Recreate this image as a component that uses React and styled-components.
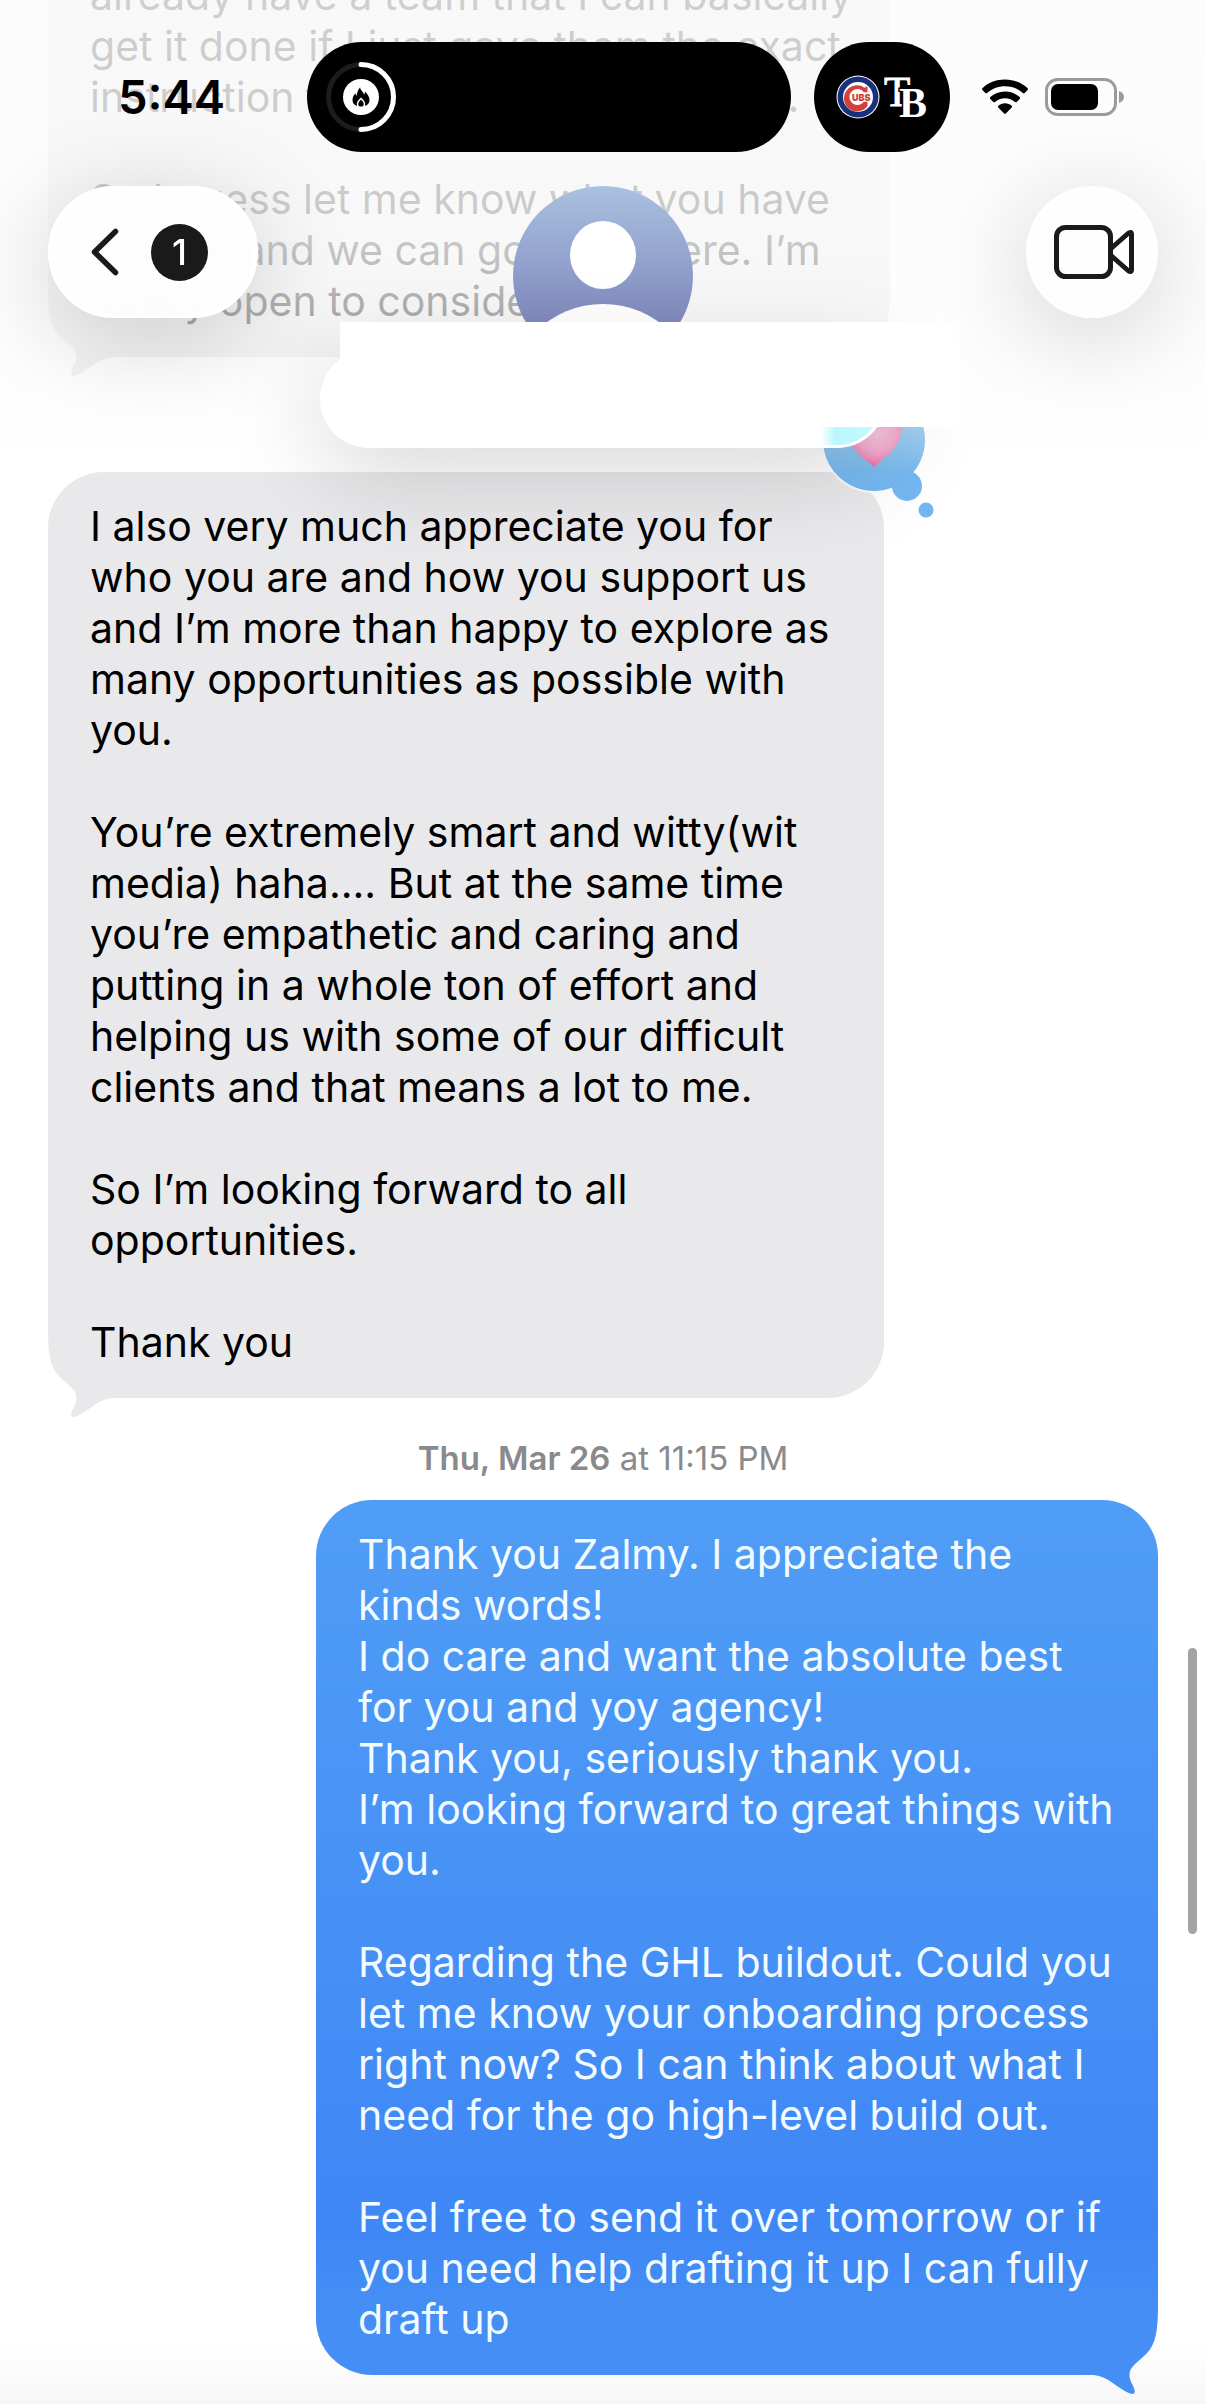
import React from 'react';
import styled, { createGlobalStyle, css } from 'styled-components';

const earlierMessage = `already have a team that I can basically
get it done if I just gave them the exact
instruction for when they have to do.

So I guess let me know what you have
in mind and we can go from there. I’m
totally open to considering it`;

const receivedMessage = `I also very much appreciate you for
who you are and how you support us
and I’m more than happy to explore as
many opportunities as possible with
you.

You’re extremely smart and witty(wit
media) haha.... But at the same time
you’re empathetic and caring and
putting in a whole ton of effort and
helping us with some of our difficult
clients and that means a lot to me.

So I’m looking forward to all
opportunities.

Thank you`;

const sentMessage = `Thank you Zalmy. I appreciate the
kinds words!
I do care and want the absolute best
for you and yoy agency!
Thank you, seriously thank you.
I’m looking forward to great things with
you.

Regarding the GHL buildout. Could you
let me know your onboarding process
right now? So I can think about what I
need for the go high-level build out.

Feel free to send it over tomorrow or if
you need help drafting it up I can fully
draft up`;

const FlameRing = () => (
  <svg width="70" height="70" viewBox="0 0 70 70" fill="none" aria-hidden="true">
    <circle cx="35" cy="35" r="32.5" stroke="#1c1c1e" strokeWidth="5" />
    <path
      d="M35 2.5a32.5 32.5 0 0 1 0 65"
      stroke="#fff"
      strokeWidth="5"
      strokeLinecap="round"
    />
    <circle cx="35" cy="35" r="18" fill="#fff" />
    <path
      d="M34 25.5c1 3.500 3.500 4.500 4 7 .8-.8 1-1.800 1-3 2.800 2.700 4.500 5.500 4.500 8.500 0 4-3 6.500-8.500 6.500s-8.500-2.500-8.500-6.800c0-3 1.500-5 3.200-6.500 0 1.200.3 2 1.100 2.600.2-3.200 1.200-6.300 3.200-8.300z"
      fill="#000"
    />
    <path
      d="M35 36.500c2.200 2 3.500 3.500 3.500 5.500 0 2.200-1.500 3.300-3.500 3.300s-3.500-1.100-3.500-3.300c0-2 1.300-3.500 3.500-5.500z"
      fill="#000"
      stroke="#fff"
      strokeWidth="1.500"
    />
  </svg>
);

const CubsLogo = () => (
  <svg width="44" height="44" viewBox="0 0 44 44" aria-label="Cubs">
    <circle cx="22" cy="22" r="21.500" fill="#fff" />
    <circle cx="22" cy="22" r="20.500" fill="#17317f" />
    <circle cx="22" cy="22" r="15" fill="#fff" />
    <path
      d="M31.500 17.500v-6.200l-3 1.500A13 13 0 1 0 31.500 31v-4.500h-3.500a8 8 0 1 1 0-9z"
      fill="#d2413a"
    />
    <rect x="16" y="17.500" width="19" height="9" fill="#fff" />
    <text
      x="16"
      y="26"
      fontFamily="Inter, sans-serif"
      fontWeight="900"
      fontSize="9"
      fill="#d2413a"
    >
      UBS
    </text>
  </svg>
);

const RaysLogo = () => (
  <svg width="44" height="44" viewBox="0 0 44 44" aria-label="Rays">
    <g fontFamily="'Liberation Serif', serif" fill="#fff">
      <text x="0" y="31" fontSize="43" stroke="#fff" strokeWidth="1">
        T
      </text>
      <text
        x="15"
        y="42"
        fontSize="42"
        fontWeight="700"
        style={{ paintOrder: 'stroke' }}
        stroke="#000"
        strokeWidth="3"
      >
        B
      </text>
    </g>
  </svg>
);

const WifiIcon = () => (
  <svg width="48" height="36" viewBox="0 0 48 36" aria-label="Wi-Fi">
    <path d="M24 0.500c9 0 17 3.300 22.600 8.700.5.500.5 1.300 0 1.800l-3 3c-.5.500-1.200.5-1.700 0C37.200 9.800 30.900 7.300 24 7.300S10.800 9.800 6.100 14c-.5.500-1.200.5-1.700 0l-3-3c-.5-.5-.5-1.300 0-1.800C7 3.800 15 .5 24 .5z" />
    <path d="M24 12.500c5.700 0 10.800 2.100 14.700 5.600.5.500.5 1.300 0 1.800l-3 3c-.5.500-1.200.5-1.700 0-2.700-2.300-6.200-3.700-10-3.700s-7.300 1.400-10 3.700c-.5.500-1.200.5-1.700 0l-3-3c-.5-.5-.5-1.300 0-1.800 3.900-3.500 9-5.600 14.700-5.600z" />
    <path d="M24 24.300c2.600 0 4.900.9 6.700 2.400.5.500.6 1.200 0 1.800l-5.800 6.100c-.5.500-1.300.5-1.800 0l-5.800-6.100c-.6-.6-.5-1.300 0-1.800 1.800-1.500 4.100-2.400 6.700-2.400z" />
  </svg>
);

const BatteryIcon = () => (
  <svg width="80" height="38" viewBox="0 0 80 38" aria-label="Battery">
    <rect
      x="1.500"
      y="1.500"
      width="69"
      height="35"
      rx="11"
      fill="none"
      stroke="#9b9b9b"
      strokeWidth="3"
    />
    <rect x="6" y="6" width="47" height="26" rx="7" fill="#000" />
    <path d="M74 13c3 1 5 3.300 5 6s-2 5-5 6z" fill="#9b9b9b" />
  </svg>
);

const ChevronIcon = () => (
  <svg width="28" height="48" viewBox="0 0 28 48" fill="none" aria-hidden="true">
    <path
      d="M24.500 3.500 3.500 24l21 20.500"
      stroke="#1a1a1a"
      strokeWidth="5.500"
      strokeLinecap="round"
      strokeLinejoin="round"
    />
  </svg>
);

const VideoIcon = () => (
  <svg width="80" height="54" viewBox="0 0 80 54" fill="none" aria-hidden="true">
    <g stroke="#1a1a1a" strokeWidth="5" strokeLinejoin="round">
      <rect x="2.500" y="2.500" width="54" height="49" rx="9" />
      <path d="M57 23.500 74 8.500q3.500-2.500 3.500 1v35q0 3.500-3.500 1L57 30.500" />
    </g>
  </svg>
);

const AvatarIcon = () => (
  <svg width="180" height="180" viewBox="0 0 180 180" aria-hidden="true">
    <defs>
      <linearGradient id="avatar" x1="0" y1="0" x2="0" y2="1">
        <stop offset="0" stopColor="#a9c1e0" />
        <stop offset="0.760" stopColor="#8089bd" />
        <stop offset="1" stopColor="#777fb5" />
      </linearGradient>
      <clipPath id="avatarClip">
        <circle cx="90" cy="90" r="90" />
      </clipPath>
    </defs>
    <g clipPath="url(#avatarClip)">
      <rect width="180" height="180" fill="url(#avatar)" />
      <ellipse cx="90" cy="69" rx="33" ry="34" fill="#fff" />
      <circle cx="90" cy="214" r="96" fill="#fff" />
    </g>
  </svg>
);

const HeartReaction = () => (
  <svg width="112" height="132" viewBox="0 0 112 132" role="img" aria-label="Heart">
    <defs>
      <linearGradient id="tapback" x1="0" y1="0" x2="0" y2="1">
        <stop offset="0" stopColor="#9bcbe6" />
        <stop offset="1" stopColor="#72b7f3" />
      </linearGradient>
      <radialGradient id="heart" cx="0.550" cy="0.400" r="0.600">
        <stop offset="0" stopColor="#f5bcd8" />
        <stop offset="0.600" stopColor="#f49fc8" />
        <stop offset="1" stopColor="#f36ba4" />
      </radialGradient>
    </defs>
    <circle cx="52" cy="53" r="53" fill="#fff" fillOpacity="0.800" />
    <circle cx="52" cy="53" r="51" fill="url(#tapback)" />
    <circle cx="85" cy="99" r="15" fill="#74b8f3" />
    <circle cx="104" cy="123" r="7.500" fill="#72b7f3" />
    <path
      d="M52 80C44 72 25 62 25 43c0-10 7-17 15-17 6 0 10 3 12 8 2-5 6-8 12-8 8 0 15 7 15 17 0 19-19 29-27 37z"
      fill="url(#heart)"
    />
  </svg>
);

const BubbleTail = ({ flip }) => (
  <Tail width="70" height="90" viewBox="0 0 70 90" $flip={flip} aria-hidden="true">
    <path d="M0 0C0 30 3 42 15 52 24 60 28.500 63 28.500 70 28.500 77 24 80 23.300 86 23 89 25 89.500 28 88.500 40 84 50 71 64 70H70V0Z" />
  </Tail>
);

const App = () => (
  <>
    <GlobalStyle />
    <Screen>
      <Thread>
        <Bubble $max={842} $gap={115}>
          {earlierMessage}
          <BubbleTail />
        </Bubble>
        <Bubble $max={836}>
          {receivedMessage}
          <BubbleTail />
          <Reaction>
            <HeartReaction />
          </Reaction>
        </Bubble>
        <DateLine>
          <b>Thu, Mar 26</b> at 11:15 PM
        </DateLine>
        <Bubble $sent $max={842}>
          {sentMessage}
          <BubbleTail flip />
        </Bubble>
      </Thread>

      <Scrim />

      <TopBar>
        <StatusBar>
          <Time>5:44</Time>
          <Island>
            <FlameRing />
          </Island>
          <ScorePill>
            <CubsLogo />
            <RaysLogo />
          </ScorePill>
          <WifiIcon />
          <BatteryIcon />
        </StatusBar>
        <NavBar>
          <BackButton aria-label="Back, 1 unread">
            <ChevronIcon />
            <Badge>1</Badge>
          </BackButton>
          <Contact>
            <AvatarIcon />
            <NamePill>
              <Glint />
            </NamePill>
            <Cover />
          </Contact>
          <VideoButton aria-label="Video call">
            <VideoIcon />
          </VideoButton>
        </NavBar>
      </TopBar>

      <ScrollThumb />
    </Screen>
  </>
);

const GlobalStyle = createGlobalStyle`
  * {
    box-sizing: border-box;
  }

  body {
    margin: 0;
    background: #fff;
    font-family: Inter, sans-serif;
  }

  svg {
    display: block;
    flex: none;
  }

  button {
    border: 0;
    padding: 0;
    font: inherit;
    cursor: pointer;
  }
`;

const Screen = styled.div`
  position: relative;
  height: 100vh;
  overflow: hidden;
  background: linear-gradient(to top, #f7f7f7, #fff 60px);
`;

const Thread = styled.main`
  display: flex;
  flex-direction: column;
  justify-content: flex-end;
  height: 100%;
  padding: 0 48px 29px;
`;

const Tail = styled.svg`
  position: absolute;
  bottom: -20px;
  left: 0;
  z-index: -1;
  fill: #e9e9eb;

  ${({ $flip }) =>
    $flip &&
    css`
      left: auto;
      right: 0;
      transform: scaleX(-1);
      fill: #448ef5;
    `}
`;

const Bubble = styled.article`
  position: relative;
  z-index: 0;
  flex: none;
  align-self: flex-start;
  width: 76%;
  max-width: ${({ $max }) => $max}px;
  margin-bottom: ${({ $gap = 0 }) => $gap}px;
  padding: 29px 0 30px 42px;
  border-radius: 56px 56px 56px 72px;
  background: #e9e9eb;
  color: #000;
  font-size: 41px;
  line-height: 51px;
  white-space: pre;

  /* the gradient stays flat beside the tail so that the two join cleanly */
  ${({ $sent }) =>
    $sent &&
    css`
      align-self: flex-end;
      border-radius: 56px 56px 72px 56px;
      background: linear-gradient(
        #509df6,
        #3f87f5 calc(100% - 150px),
        #448ef5 calc(100% - 70px)
      );
      color: #f2fbff;
    `}
`;

const Reaction = styled.div`
  position: absolute;
  top: -85px;
  right: -50px;
`;

const DateLine = styled.p`
  margin: 41px 0 23px;
  color: #8a8a8d;
  font-size: 33px;
  line-height: 38px;
  text-align: center;

  b {
    font-weight: 600;
  }
`;

const Scrim = styled.div`
  position: absolute;
  inset: 0 0 auto;
  height: 470px;
  background: linear-gradient(
    rgba(252, 252, 252, 0.82),
    rgba(252, 252, 252, 0.8) 50%,
    rgba(252, 252, 252, 0.66) 70%,
    rgba(252, 252, 252, 0)
  );
`;

const TopBar = styled.header`
  position: absolute;
  inset: 0 0 auto;
  padding-top: 42px;
`;

const StatusBar = styled.div`
  display: flex;
  align-items: center;
  height: 110px;
  padding: 0 81px 0 118px;

  svg + svg {
    margin-left: 16px;
  }
`;

const Time = styled.time`
  flex: 0 0 189px;
  font-size: 47px;
  font-weight: 600;
  line-height: 56px;
`;

const Island = styled.div`
  display: flex;
  align-items: center;
  flex: 1;
  height: 110px;
  padding-left: 19px;
  border-radius: 55px;
  background: #000;
`;

const ScorePill = styled.div`
  display: flex;
  align-items: center;
  justify-content: center;
  flex: 0 0 136px;
  height: 110px;
  margin: 0 31px 0 23px;
  border-radius: 55px;
  background: #000;

  svg + svg {
    margin-left: 4px;
  }
`;

const NavBar = styled.nav`
  display: grid;
  grid-template-columns: 1fr minmax(0, 566px) 1fr;
  align-items: start;
  padding: 34px 48px 0;
`;

const glass = css`
  display: flex;
  align-items: center;
  justify-content: center;
  height: 132px;
  border-radius: 66px;
  background: rgba(254, 254, 254, 0.95);
  backdrop-filter: blur(6px);
  box-shadow: 0 18px 100px rgba(0, 0, 0, 0.18);
`;

const BackButton = styled.button`
  ${glass}
  gap: 32px;
  width: 210px;
  padding-right: 7px;
  border: 4px solid #fff;
`;

const VideoButton = styled.button`
  ${glass}
  justify-self: end;
  width: 132px;
  padding-left: 4px;
`;

const Badge = styled.span`
  width: 57px;
  height: 57px;
  border-radius: 50%;
  background: #1a1a1a;
  color: #fff;
  font-size: 36px;
  font-weight: 500;
  line-height: 57px;
  text-align: center;
`;

const Contact = styled.div`
  position: relative;
  display: flex;
  flex-direction: column;
  align-items: center;
`;

const NamePill = styled.div`
  position: relative;
  overflow: hidden;
  width: 100%;
  height: 98px;
  margin-top: -16px;
  border-radius: 49px;
  background: #fff;
  box-shadow: 0 18px 100px rgba(0, 0, 0, 0.18);
`;

const Glint = styled.span`
  position: absolute;
  right: 3px;
  bottom: 3px;
  width: 62px;
  height: 92px;
  border-radius: 0 46px 46px 0;
  background: linear-gradient(to right, #fff, #b9f7fd 14px, #c6fbff);
`;

const Cover = styled.div`
  position: absolute;
  top: 136px;
  left: 20px;
  width: 620px;
  height: 105px;
  background: #fff;
`;

const ScrollThumb = styled.div`
  position: absolute;
  top: 1648px;
  right: 9px;
  width: 9px;
  height: 286px;
  border-radius: 5px;
  background: #a3a3a3;
`;

export default App;
